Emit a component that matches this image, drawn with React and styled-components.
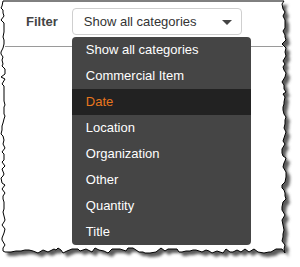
import React, { useState } from "react";
import styled, { createGlobalStyle } from "styled-components";

const GlobalStyle = createGlobalStyle`
    html, body {
        margin: 0;
        padding: 0;
        background: #fff;
    }
    body {
        font-family: "Liberation Sans", Arial, sans-serif;
    }
`;

const categories = [
    "Show all categories",
    "Commercial Item",
    "Date",
    "Location",
    "Organization",
    "Other",
    "Quantity",
    "Title",
];

// deterministic jitter so the torn edge looks the same every render
const makeTornPath = () => {
    let seed = 7;
    const rand = () => {
        seed = (seed * 16807) % 2147483647;
        return (seed - 1) / 2147483646;
    };
    const pts = [];
    pts.push([3, 1]);
    pts.push([284, 1]);
    for (let y = 4; y < 250; y += 2 + Math.round(rand() * 3)) {
        pts.push([284 + Math.round(rand() * 4 - 2), y]);
    }
    pts.push([285, 253]);
    for (let x = 282; x > 4; x -= 2 + Math.round(rand() * 4)) {
        pts.push([x, 251 + Math.round(rand() * 5 - 3)]);
    }
    pts.push([3, 251]);
    for (let y = 248; y > 3; y -= 2 + Math.round(rand() * 3)) {
        pts.push([3 + Math.round(rand() * 4 - 2), y]);
    }
    return "M" + pts.map((p) => p.join(",")).join(" L") + " Z";
};

const tornPath = makeTornPath();

const Page = styled.div`
    position: relative;
    width: 300px;
    height: 267px;
    overflow: hidden;
`;

const TornEdge = styled.svg`
    position: absolute;
    inset: 0;
    z-index: 0;
`;

const Content = styled.div`
    position: relative;
    z-index: 1;
`;

const Toolbar = styled.div`
    display: flex;
    align-items: center;
    gap: 14px;
    height: 47px;
    padding: 8px 0 0 21px;
    margin-left: 5px;
    width: 278px;
    box-sizing: border-box;
    align-items: flex-start;
    border-bottom: 1px solid #9a9a9a;
`;

const Label = styled.span`
    font-size: 13px;
    font-weight: bold;
    color: #444;
    line-height: 27px;
`;

const SelectWrap = styled.div`
    position: relative;
`;

const SelectBox = styled.div`
    display: flex;
    align-items: center;
    justify-content: space-between;
    width: 170px;
    height: 27px;
    box-sizing: border-box;
    padding: 0 9px 0 11px;
    border: 1px solid #cfcfcf;
    border-radius: 4px;
    background: #fff;
    font-size: 13px;
    color: #333;
`;

const Caret = styled.span`
    width: 0;
    height: 0;
    border-left: 5px solid transparent;
    border-right: 5px solid transparent;
    border-top: 5px solid #444;
    margin-top: 1px;
`;

const Menu = styled.ul`
    position: absolute;
    top: 29px;
    left: 0;
    width: 179px;
    margin: 0;
    padding: 0;
    list-style: none;
    background: #454545;
    border-radius: 4px;
    overflow: hidden;
`;

const Item = styled.li`
    height: 26px;
    line-height: 26px;
    padding-left: 14px;
    font-size: 13px;
    color: ${(p) => (p.$active ? "#e8761e" : "#fff")};
    background: ${(p) => (p.$active ? "#222" : "transparent")};
`;

const App = () => {
    const [active] = useState("Date");

    return (
        <Page>
            <GlobalStyle />
            <TornEdge width="300" height="267" viewBox="0 0 300 267">
                <defs>
                    <filter id="blur" x="-10%" y="-10%" width="120%" height="120%">
                        <feGaussianBlur stdDeviation="1.8" />
                    </filter>
                </defs>
                <path
                    d={tornPath}
                    transform="translate(4,4)"
                    fill="#5a5a5a"
                    filter="url(#blur)"
                />
                <path d={tornPath} fill="#fff" stroke="#000" strokeWidth="1" />
            </TornEdge>
            <Content>
                <Toolbar>
                    <Label>Filter</Label>
                    <SelectWrap>
                        <SelectBox>
                            Show all categories
                            <Caret />
                        </SelectBox>
                        <Menu>
                            {categories.map((c) => (
                                <Item key={c} $active={c === active}>
                                    {c}
                                </Item>
                            ))}
                        </Menu>
                    </SelectWrap>
                </Toolbar>
            </Content>
        </Page>
    );
};

export default App;
